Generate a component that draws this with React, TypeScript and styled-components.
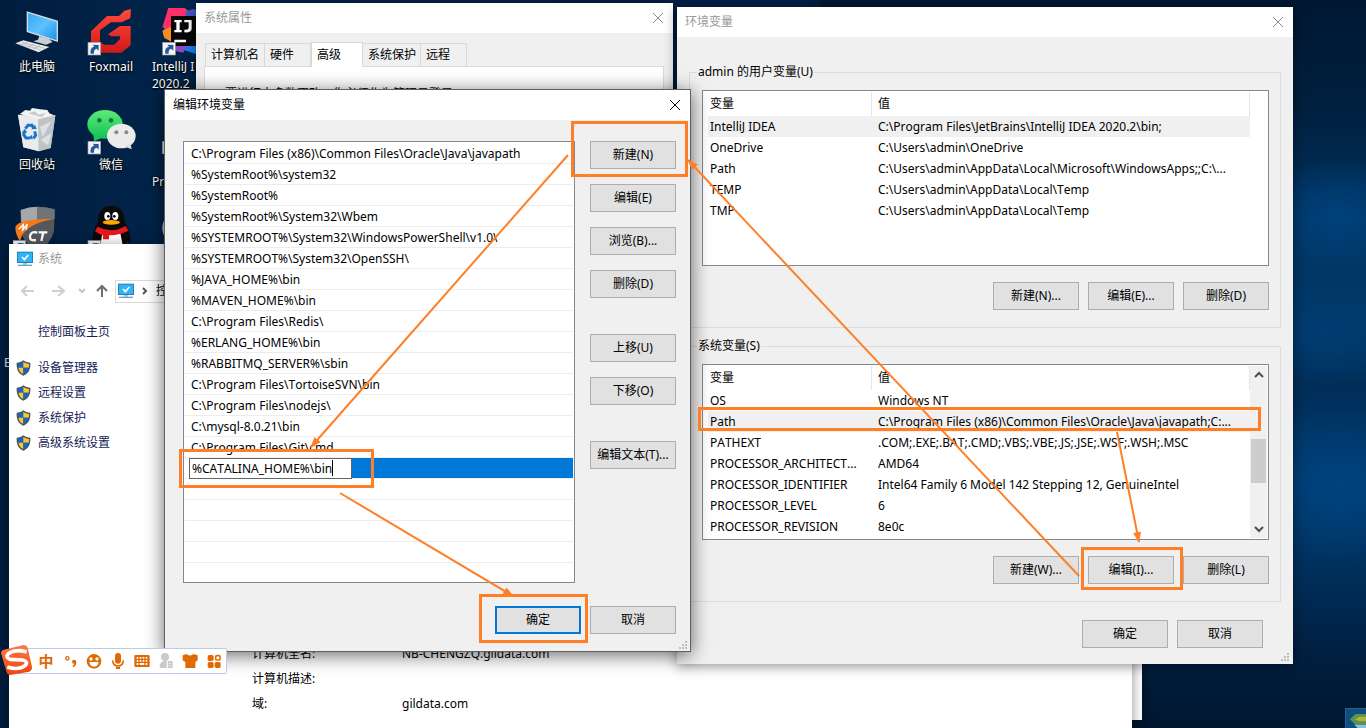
import React from "react";
import styled, { createGlobalStyle, css } from "styled-components";

const Global = createGlobalStyle`
  *, *::before, *::after { box-sizing: border-box; }
  body { margin: 0; }
  body, button, input, table {
    font-family: "Noto Sans", "Noto Sans CJK SC", sans-serif;
    font-size: 12px;
    font-kerning: none;
    line-height: 16px;
    color: #000;
  }
  ul, dl, dd, h1, p { margin: 0; padding: 0; list-style: none; }
  h1 { font-size: 12px; font-weight: 400; }
`;

const Desktop = styled.main`
  position: relative;
  width: 100%;
  height: 100vh;
  overflow: hidden;
  background:
    radial-gradient(ellipse 90px 60px at 98% 30%, #00427c 0, transparent 100%),
    radial-gradient(ellipse 110px 50px at 97% 46%, #003c72 0, transparent 100%),
    radial-gradient(ellipse 100px 80px at 98% 67%, #00427e 0, transparent 100%),
    linear-gradient(180deg, #001733 0, #00203f 15%, #00305c 28%, #003868 42%, #002e58 53%, #003a6e 66%, #002d58 80%, #001f40 90%, #001730 100%) right / 40% 100% no-repeat,
    linear-gradient(90deg, #001d3e 0, #02244a 12%, #002048 50%, #001a38 100%);
  background-color: #001d3e;
`;

/* ---------- desktop shortcuts ---------- */

const Shortcuts = styled.ul`
  display: grid;
  grid-template-columns: repeat(3, 74px);
  grid-auto-rows: 98px;
  padding-top: 8px;
`;

const Shortcut = styled.li`
  display: flex;
  flex-direction: column;
  align-items: center;
  gap: 2px;
  color: #fff;
  text-align: center;
  line-height: 17px;
  text-shadow: 0 1px 2px #000, 0 0 2px #000;
  white-space: nowrap;
  svg { width: 48px; height: 48px; flex: none; }
`;

const WideLabel = styled.span`
  width: 66px;
  text-align: left;
`;

const Clipped = styled.span<{ $top: number }>`
  position: absolute;
  left: 4px;
  top: ${(p) => p.$top}px;
  color: #dfe6ee;
`;

/* ---------- windows ---------- */

interface Box { $x: number; $y: number; $w: number; $h: number }

const Window = styled.section<Box & { $active?: boolean; $plain?: boolean }>`
  position: absolute;
  left: ${(p) => p.$x}px;
  top: ${(p) => p.$y}px;
  width: ${(p) => p.$w}px;
  height: ${(p) => p.$h}px;
  display: flex;
  flex-direction: column;
  background: ${(p) => (p.$plain ? "#fff" : "#f0f0f0")};
  box-shadow: 0 2px 12px rgba(0, 0, 0, 0.45);
  ${(p) =>
    p.$active &&
    css`
      outline: 1px solid #5f5f5f;
      outline-offset: -1px;
      box-shadow: 0 3px 18px rgba(0, 0, 0, 0.6);
    `}
`;

const TitleBar = styled.header<{ $active?: boolean }>`
  display: flex;
  align-items: center;
  gap: 5px;
  height: 30px;
  padding: 0 8px;
  flex: none;
  background: #fff;
  ${(p) => p.$active && css`height: 31px; padding: 0 9px;`}
  h1 { flex: 1; color: ${(p) => (p.$active ? "#000" : "#999")}; }
`;

const CloseButton = styled.button<{ $active?: boolean }>`
  display: grid;
  place-items: center;
  width: 14px;
  height: 14px;
  padding: 0;
  border: 0;
  background: none;
  color: ${(p) => (p.$active ? "#000" : "#8a8a8a")};
`;

const PushButton = styled.button<{ $primary?: boolean }>`
  width: 86px;
  height: 28px;
  padding: 0;
  border: ${(p) => (p.$primary ? "2px solid #0078d7" : "1px solid #adadad")};
  border-radius: 0;
  background: #e1e1e1;
`;

const ButtonRow = styled.div<{ $top: number; $right?: number }>`
  display: flex;
  justify-content: flex-end;
  gap: 9px;
  margin-top: ${(p) => p.$top}px;
  padding-right: ${(p) => p.$right ?? 0}px;
`;

const Grip = styled.svg`
  position: absolute;
  right: 3px;
  bottom: 2px;
  width: 9px;
  height: 9px;
`;

/* ---------- system properties ---------- */

const Tabs = styled.nav`
  display: flex;
  align-items: flex-end;
  padding: 9px 9px 0;
`;

const Tab = styled.button<{ $w: number; $on?: boolean }>`
  width: ${(p) => p.$w}px;
  height: ${(p) => (p.$on ? 25 : 23)}px;
  margin-bottom: ${(p) => (p.$on ? -1 : 0)}px;
  padding: 0 0 0 5px;
  text-align: left;
  white-space: nowrap;
  border: 1px solid #d9d9d9;
  border-bottom: 0;
  border-left-width: ${(p) => (p.$on ? 1 : 0)}px;
  background: ${(p) => (p.$on ? "#fff" : "#f0f0f0")};
  position: relative;
  &:first-child { border-left-width: 1px; }
`;

const TabPane = styled.div`
  flex: 1;
  margin: 0 9px 9px 8px;
  padding: 19px 20px;
  border: 1px solid #dcdcdc;
  background: #fff;
`;

/* ---------- environment variables ---------- */

const Body = styled.div`
  padding: 27px 12px 0;
`;

const Group = styled.fieldset`
  min-width: 0;
  margin: 0 0 10px;
  padding: 10px 11px 17px 12px;
  border: 1px solid #dcdcdc;
  legend { height: 16px; margin-left: -5px; padding: 0 1px; }
`;

const GridBox = styled.div`
  display: flex;
  justify-content: space-between;
  height: 176px;
  padding: 1px 1px 1px 5px;
  overflow: hidden;
  border: 1px solid #828790;
  background: #fff;
`;

const VarTable = styled.table`
  width: 542px;
  height: max-content;
  table-layout: fixed;
  border-collapse: separate;
  border-spacing: 0;
  white-space: nowrap;
  th, td { padding: 0 0 0 2px; overflow: hidden; text-align: left; font-weight: 400; }
  th { height: 24px; border-right: 1px solid #e5e5e5; }
  td { height: 21px; }
  th:first-child { width: 164px; }
  th + th, td + td { padding-left: 6px; }
`;

const VarRow = styled.tr<{ $on?: boolean }>`
  background: ${(p) => (p.$on ? "#f0f0f0" : "#fff")};
`;

const ScrollBar = styled.div`
  display: flex;
  flex-direction: column;
  align-items: center;
  width: 17px;
  background: #f0f0f0;
  svg { flex: none; width: 17px; height: 17px; }
`;

const Thumb = styled.div`
  width: 15px;
  height: 44px;
  margin: 56px 0 auto;
  background: #cdcdcd;
`;

/* ---------- edit dialog ---------- */

const EditBody = styled.div`
  display: flex;
  gap: 15px;
  padding: 21px 15px 0 19px;
`;

const PathList = styled.ul`
  flex: 1;
  height: 442px;
  padding: 1px;
  overflow: hidden;
  border: 1px solid #828790;
  background: #fff;
`;

const PathItem = styled.li<{ $editing?: boolean }>`
  height: 21px;
  padding: 2px 6px;
  border-bottom: 1px solid #ececec;
  line-height: 17px;
  white-space: nowrap;
  ${(p) =>
    p.$editing &&
    css`
      position: relative;
      padding: 0 0 0 4px;
      background: linear-gradient(90deg, #fff 4px, #0078d7 4px);
    `}
`;

const PathInput = styled.input`
  display: block;
  width: 163px;
  height: 21px;
  padding: 0 2px;
  border: 1px solid #646464;
  border-radius: 0;
  background: #fff;
  outline: 0;
`;

const Caret = styled.span`
  position: absolute;
  left: 147px;
  top: 2px;
  width: 1px;
  height: 16px;
  background: #000;
`;

const SideButtons = styled.div`
  display: flex;
  flex-direction: column;
  gap: 36px;
`;

const ButtonStack = styled.div`
  display: grid;
  gap: 15px;
`;

/* ---------- system window ---------- */

const NavBar = styled.div`
  display: flex;
  align-items: center;
  height: 34px;
  padding-left: 11px;
  svg { flex: none; }
`;

const Address = styled.div`
  display: flex;
  align-items: center;
  flex: 1;
  height: 23px;
  margin: 0 8px 0 4px;
  padding-left: 2px;
  border: 1px solid #d9d9d9;
`;

const SystemBody = styled.div`
  display: grid;
  grid-template-columns: 243px 1fr;
`;

const SideLinks = styled.nav`
  display: flex;
  flex-direction: column;
  padding: 11px 0 0 7px;
`;

const SideLink = styled.a<{ $home?: boolean }>`
  display: flex;
  align-items: center;
  gap: 7px;
  height: 25px;
  margin-bottom: ${(p) => (p.$home ? 11 : 0)}px;
  padding-left: ${(p) => (p.$home ? 22 : 0)}px;
  color: #151c55;
  text-decoration: none;
`;

const Facts = styled.dl`
  display: grid;
  grid-template-columns: 150px 1fr;
  grid-auto-rows: 25px;
  align-items: center;
  padding-top: 333px;
`;

/* ---------- input method bar ---------- */

const ImeBar = styled.div`
  position: absolute;
  left: 16px;
  top: 648px;
  display: flex;
  align-items: center;
  width: 211px;
  height: 26px;
  padding-left: 17px;
  border: 1px solid #bccbe6;
  border-radius: 2px;
  background: #fff;
`;

const ImeLogo = styled.svg`
  position: absolute;
  left: -17px;
  top: -6px;
  width: 34px;
  height: 34px;
`;

const ImeButton = styled.button`
  display: grid;
  place-items: center;
  width: 24px;
  height: 24px;
  padding: 0;
  border: 0;
  background: none;
  color: #df6a04;
  svg { width: 24px; height: 24px; }
`;

const Glyph = styled.span`
  font-family: "Noto Sans CJK SC", sans-serif;
  font-size: 15px;
  font-weight: 700;
`;

const Annotations = styled.svg`
  position: absolute;
  inset: 0;
  width: 100%;
  height: 100%;
  pointer-events: none;
`;

const Corner = styled.svg`
  position: absolute;
  left: 1345px;
  top: 708px;
  width: 21px;
  height: 20px;
`;

/* ---------- drawings ---------- */

const Cross = () => (
  <svg width="12" height="12" viewBox="0 0 12 12" aria-hidden="true">
    <path d="M1 1l10 10M11 1L1 11" stroke="currentColor" fill="none" />
  </svg>
);

const ResizeGrip = () => (
  <Grip viewBox="0 0 9 9" aria-hidden="true" fill="#bfbfbf">
    <path d="M6 0h2v2H6zM3 3h2v2H3zM6 3h2v2H6zM0 6h2v2H0zM3 6h2v2H3zM6 6h2v2H6z" />
  </Grip>
);

const Monitor = () => (
  <svg width="16" height="16" viewBox="0 0 48 48" aria-hidden="true">
    <rect x="0" y="2" width="48" height="34" fill="#2b7db3" />
    <rect x="3" y="5" width="42" height="28" fill="#2fb4f5" />
    <path d="M15 18l7 8 12-14" stroke="#fff" strokeWidth="5" fill="none" />
    <path d="M18 36h12v5H18z" fill="#9cc4da" />
    <path d="M3 41h42v4H3z" fill="#6fa0bb" />
  </svg>
);

const Shield = () => (
  <svg width="15" height="16" viewBox="0 0 45 48" aria-hidden="true">
    <path d="M22 1C17 6 9 8 2 8c-1 18 4 32 20 39C39 40 44 26 43 8 36 8 28 6 22 1z" fill="#4a5560" />
    <path d="M22 6C17 10 11 11 6 12c0 4 0 8 1 11h15z" fill="#0f67c8" />
    <path d="M22 6c5 4 11 5 17 6 0 4 0 8-1 11H22z" fill="#ffc52e" />
    <path d="M7 23h15v19C13 38 9 31 7 23z" fill="#ffc52e" />
    <path d="M38 23H22v19c9-4 14-11 16-19z" fill="#0f67c8" />
  </svg>
);

const Link = ({ x, y }: { x: number; y: number }) => (
  <g transform={`translate(${x} ${y})`}>
    <rect width="38" height="38" fill="#f4f4f4" stroke="#9a9a9a" strokeWidth="2" />
    <path d="M8 34c-2-12 2-20 11-21l-5-6 18 1v17l-6-6c-6 1-9 6-8 15z" fill="#23589f" />
  </g>
);

const ComputerIcon = () => (
  <svg viewBox="39 24 144 144" aria-hidden="true">
    <defs>
      <linearGradient id="scr" x1="0" y1="0" x2="1" y2="1">
        <stop offset="0" stopColor="#36a8f5" /><stop offset=".5" stopColor="#5cc2ff" /><stop offset="1" stopColor="#1e90e8" />
      </linearGradient>
    </defs>
    <path d="M118 108l28 8 12 10-20 8-38-10 14-5z" fill="#c9ced2" />
    <path d="M80 34l94 28v64l-94-30z" fill="#d9dee1" />
    <path d="M84 39l86 26v56L84 93z" fill="url(#scr)" />
    <path d="M46 130l24-9 78 20-32 16z" fill="#e6e8ea" />
    <path d="M56 131l68 19M66 127l68 18M62 136l22-10M80 142l22-10M98 147l22-10" stroke="#a9aeb3" strokeWidth="2" />
  </svg>
);

const FoxmailIcon = () => (
  <svg viewBox="262 24 144 144" aria-hidden="true">
    <defs>
      <linearGradient id="fox" x1="0" y1="0" x2="0" y2="1">
        <stop offset="0" stopColor="#ff4a3c" /><stop offset="1" stopColor="#d01a1a" />
      </linearGradient>
    </defs>
    <path d="M394 27l-2 28-26 12h-32l-33 24v34l12 9h30l18-17v-8h-26l-10-6 36-25h32v58l-28 22h-76l-15-14V94l48-46h36l16-16z" fill="url(#fox)" />
    <Link x={265} y={127} />
  </svg>
);

const IdeaIcon = () => (
  <svg viewBox="486 24 144 144" aria-hidden="true">
    <path d="M508 24l44-2 36 24 40 24-30 94-62-20-44-40z" fill="#1680f0" />
    <path d="M508 24l44-4 26 22-58 50-30-10z" fill="#ff3068" />
    <path d="M560 34l26-8 30 34-56 10z" fill="#4658c8" />
    <path d="M490 92l26-12v44l-20-10z" fill="#ff8a1c" />
    <path d="M520 132h50l-18 26-26-6z" fill="#8c4ac0" />
    <rect x="516" y="48" width="90" height="90" fill="#080808" />
    <path d="M526 60h22v7h-6v23h6v7h-22v-7h6V67h-6zM556 60h22v26q-1 13-22 11v-8q12 2 13-5V67h-13zM526 119h35v8h-35z" fill="#fff" />
    <Link x={491} y={127} />
  </svg>
);

const BinIcon = () => (
  <svg viewBox="39 318 144 144" aria-hidden="true">
    <path d="M54 344l112 2-14 98-36 10-46-12z" fill="#d4d7d9" />
    <path d="M54 344l60 12 4 98-48-12z" fill="#e9ebec" />
    <path d="M114 356l52-10-14 98-36 10z" fill="#c0c4c7" />
    <path d="M120 380l34-16-26 46zM122 420l32-20-10 36z" fill="#dfe2e4" />
    <path d="M60 342l16-12 14 2 6-8 24 4 22 2 6 10 14 6-48 12z" fill="#f2f3f4" />
    <path d="M84 340l20-6 12 10 22-6-12 14z" fill="#c8cbce" />
    <g fill="none" stroke="#1876cf" strokeWidth="9">
      <path d="M76 386l8-10h12l5 9M104 394l3 12-7 9M90 414H78l-7-10 2-10" />
    </g>
    <path d="M94 388l16-1-5-13zM96 404l2 15-12-6zM66 398l8-12 8 12z" fill="#1876cf" />
  </svg>
);

const ChatIcon = () => (
  <svg viewBox="262 318 144 144" overflow="visible" aria-hidden="true">
    <defs>
      <linearGradient id="wx" x1="0" y1="0" x2="0" y2="1">
        <stop offset="0" stopColor="#5ceb78" /><stop offset="1" stopColor="#14c257" />
      </linearGradient>
    </defs>
    <ellipse cx="316" cy="373" rx="53" ry="43" fill="url(#wx)" />
    <path d="M280 400l4 24 26-12z" fill="#1cc55c" />
    <circle cx="299" cy="361" r="7" fill="#147a3c" /><circle cx="334" cy="361" r="7" fill="#147a3c" />
    <ellipse cx="365" cy="408" rx="43" ry="37" fill="#ebebeb" />
    <path d="M376 440l20 8-4-18z" fill="#dedede" />
    <circle cx="350" cy="397" r="6" fill="#8a8a8a" /><circle cx="380" cy="397" r="6" fill="#8a8a8a" />
    <Link x={265} y={424} />
  </svg>
);

const CtIcon = () => (
  <svg viewBox="39 612 144 144" aria-hidden="true">
    <path d="M62 630q48-18 102-2l-2 66q-10 40-50 60-46-24-50-70z" fill="#54585c" />
    <path d="M62 630q26-10 50-10v40l-48 8z" fill="#a4a8ab" />
    <path d="M112 620q28 0 52 8v28l-52 4z" fill="#6f7478" />
    <path d="M46 680q10-24 120-24-70 10-98 46l-8 22q-14-20-14-44z" fill="#f57a17" />
    <path d="M56 688l14-14-2 16 14-18-4 18" stroke="#fff" strokeWidth="4" fill="none" />
    <path d="M112 698q-18-6-22 10-2 16 18 12M116 697h26M130 697l-6 26" stroke="#fff" strokeWidth="7" fill="none" />
    <Link x={39} y={722} />
  </svg>
);

const PenguinIcon = () => (
  <svg viewBox="262 612 144 144" aria-hidden="true">
    <path d="M335 618c28 0 40 20 40 48 12 20 18 40 18 62l-12-6-8 32h-76l-8-32-12 6c0-22 6-42 18-62 0-28 12-48 40-48z" fill="#0a0a0a" />
    <path d="M308 700h54l10 50h-72z" fill="#fff" />
    <ellipse cx="323" cy="648" rx="9" ry="12" fill="#fff" /><ellipse cx="347" cy="648" rx="9" ry="12" fill="#fff" />
    <circle cx="326" cy="649" r="4" /><circle cx="344" cy="649" r="4" />
    <ellipse cx="335" cy="667" rx="26" ry="7" fill="#ffa800" />
    <path d="M294 680q42 22 84-2l8 14q-22 12-58 14v12h-18v-12q-14-4-24-12z" fill="#e8171c" />
    <Link x={265} y={722} />
  </svg>
);

const EdgeIcon = ({ badge }: { badge?: boolean }) => (
  <svg viewBox="486 318 144 144" aria-hidden="true">
    {badge ? <Link x={490} y={424} /> : <circle cx="545" cy="390" r="55" fill="#c8ccd0" />}
  </svg>
);

const ImeSvg = ({ cx, children }: { cx: number; children: React.ReactNode }) => (
  <svg viewBox={`${cx - 36} 537 72 72`} fill="currentColor" aria-hidden="true">{children}</svg>
);

/* ---------- data ---------- */

const paths = [
  "C:\\Program Files (x86)\\Common Files\\Oracle\\Java\\javapath",
  "%SystemRoot%\\system32",
  "%SystemRoot%",
  "%SystemRoot%\\System32\\Wbem",
  "%SYSTEMROOT%\\System32\\WindowsPowerShell\\v1.0\\",
  "%SYSTEMROOT%\\System32\\OpenSSH\\",
  "%JAVA_HOME%\\bin",
  "%MAVEN_HOME%\\bin",
  "C:\\Program Files\\Redis\\",
  "%ERLANG_HOME%\\bin",
  "%RABBITMQ_SERVER%\\sbin",
  "C:\\Program Files\\TortoiseSVN\\bin",
  "C:\\Program Files\\nodejs\\",
  "C:\\mysql-8.0.21\\bin",
  "C:\\Program Files\\Git\\cmd",
];

const userVars: [string, string][] = [
  ["IntelliJ IDEA", "C:\\Program Files\\JetBrains\\IntelliJ IDEA 2020.2\\bin;"],
  ["OneDrive", "C:\\Users\\admin\\OneDrive"],
  ["Path", "C:\\Users\\admin\\AppData\\Local\\Microsoft\\WindowsApps;;C:\\..."],
  ["TEMP", "C:\\Users\\admin\\AppData\\Local\\Temp"],
  ["TMP", "C:\\Users\\admin\\AppData\\Local\\Temp"],
];

const systemVars: [string, string][] = [
  ["OS", "Windows NT"],
  ["Path", "C:\\Program Files (x86)\\Common Files\\Oracle\\Java\\javapath;C:..."],
  ["PATHEXT", ".COM;.EXE;.BAT;.CMD;.VBS;.VBE;.JS;.JSE;.WSF;.WSH;.MSC"],
  ["PROCESSOR_ARCHITECT...", "AMD64"],
  ["PROCESSOR_IDENTIFIER", "Intel64 Family 6 Model 142 Stepping 12, GenuineIntel"],
  ["PROCESSOR_LEVEL", "6"],
  ["PROCESSOR_REVISION", "8e0c"],
];

const marks = [
  [571, 121, 117, 56],
  [179, 449, 195, 39],
  [479, 594, 109, 49],
  [698, 407, 563, 24],
  [1081, 547, 102, 43],
];

const arrows = [
  [568, 155, 311, 447],
  [340, 493, 513, 596],
  [1117, 432, 1139, 542],
  [1079, 576, 688, 160],
];

const Variables = ({ rows, selected }: { rows: [string, string][]; selected: string }) => (
  <VarTable>
    <thead>
      <tr><th scope="col">变量</th><th scope="col">值</th></tr>
    </thead>
    <tbody>
      {rows.map(([name, value]) => (
        <VarRow key={name} $on={name === selected}><td>{name}</td><td>{value}</td></VarRow>
      ))}
    </tbody>
  </VarTable>
);

const Title = ({ text, active }: { text: string; active?: boolean }) => (
  <TitleBar $active={active}>
    <h1>{text}</h1>
    <CloseButton $active={active} aria-label="关闭"><Cross /></CloseButton>
  </TitleBar>
);

export default function App() {
  return (
    <Desktop>
      <Global />
      <Shortcuts>
        <Shortcut><ComputerIcon />此电脑</Shortcut>
        <Shortcut><FoxmailIcon />Foxmail</Shortcut>
        <Shortcut><IdeaIcon /><WideLabel>IntelliJ I<br />2020.2</WideLabel></Shortcut>
        <Shortcut><BinIcon />回收站</Shortcut>
        <Shortcut><ChatIcon />微信</Shortcut>
        <Shortcut><EdgeIcon badge /><WideLabel><br />Pr</WideLabel></Shortcut>
        <Shortcut><CtIcon /></Shortcut>
        <Shortcut><PenguinIcon /></Shortcut>
        <Shortcut><EdgeIcon /></Shortcut>
      </Shortcuts>
      <Clipped $top={355}>E</Clipped>

      <Corner viewBox="0 0 63 60" aria-hidden="true">
        <rect width="66" height="63" fill="#0f4f80" stroke="#3b78a4" strokeWidth="3" />
        <path d="M15 34l16-16h34v32H31z" fill="#5f8f52" />
        <path d="M30 34l14-8h20v14H44z" fill="#a9b83a" />
        <path d="M28 50h36v12H40z" fill="#8fc0dc" />
      </Corner>

      <Window $plain $x={900} $y={400} $w={242} $h={320} aria-hidden="true" />

      <Window $plain $x={9} $y={244} $w={1123} $h={520}>
        <TitleBar><Monitor /><h1>系统</h1></TitleBar>
        <NavBar>
          <svg width="91" height="20" viewBox="0 0 91 20" fill="none" aria-hidden="true">
            <path d="M14 10H3M7 5l-5 5 5 5M32 10h12M38 5l6 5-6 5" stroke="#cfcfcf" strokeWidth="2" />
            <path d="M59 8l3 3 3-3" stroke="#c4c4c4" strokeWidth="2" />
            <path d="M82 16V5M77 10l5-5 5 5" stroke="#6e6e6e" strokeWidth="2" />
          </svg>
          <Address>
            <Monitor />
            <svg width="22" height="10" viewBox="0 0 22 10" fill="none" aria-hidden="true">
              <path d="M9 2l3 3-3 3" stroke="#555" strokeWidth="2" />
            </svg>
            控
          </Address>
        </NavBar>
        <SystemBody>
          <SideLinks>
            <SideLink $home href="#home">控制面板主页</SideLink>
            {["设备管理器", "远程设置", "系统保护", "高级系统设置"].map((t) => (
              <SideLink key={t} href={`#${t}`}><Shield />{t}</SideLink>
            ))}
          </SideLinks>
          <Facts>
            <dt>计算机全名:</dt><dd>NB-CHENGZQ.gildata.com</dd>
            <dt>计算机描述:</dt><dd />
            <dt>域:</dt><dd>gildata.com</dd>
          </Facts>
        </SystemBody>
      </Window>

      <Window $x={196} $y={3} $w={477} $h={540}>
        <Title text="系统属性" />
        <Tabs>
          <Tab $w={60}>计算机名</Tab>
          <Tab $w={46}>硬件</Tab>
          <Tab $w={52} $on>高级</Tab>
          <Tab $w={58}>系统保护</Tab>
          <Tab $w={46}>远程</Tab>
        </Tabs>
        <TabPane>要进行大多数更改，你必须作为管理员登录。</TabPane>
      </Window>

      <Window $x={677} $y={7} $w={616} $h={657}>
        <Title text="环境变量" />
        <Body>
          <Group>
            <legend>admin 的用户变量(U)</legend>
            <GridBox><Variables rows={userVars} selected="IntelliJ IDEA" /></GridBox>
            <ButtonRow $top={16}>
              <PushButton>新建(N)...</PushButton>
              <PushButton>编辑(E)...</PushButton>
              <PushButton>删除(D)</PushButton>
            </ButtonRow>
          </Group>
          <Group>
            <legend>系统变量(S)</legend>
            <GridBox>
              <Variables rows={systemVars} selected="Path" />
              <ScrollBar aria-hidden="true">
                <svg viewBox="0 0 17 17" fill="none"><path d="M5 11l4-4 4 4" stroke="#505050" strokeWidth="2" /></svg>
                <Thumb />
                <svg viewBox="0 0 17 17" fill="none"><path d="M5 6l4 4 4-4" stroke="#505050" strokeWidth="2" /></svg>
              </ScrollBar>
            </GridBox>
            <ButtonRow $top={16}>
              <PushButton>新建(W)...</PushButton>
              <PushButton>编辑(I)...</PushButton>
              <PushButton>删除(L)</PushButton>
            </ButtonRow>
          </Group>
          <ButtonRow $top={18} $right={18}>
            <PushButton>确定</PushButton>
            <PushButton>取消</PushButton>
          </ButtonRow>
        </Body>
        <ResizeGrip />
      </Window>

      <Window $active $x={164} $y={89} $w={527} $h={563}>
        <Title text="编辑环境变量" active />
        <EditBody>
          <PathList>
            {paths.map((p) => <PathItem key={p}>{p}</PathItem>)}
            <PathItem $editing>
              <PathInput aria-label="路径" defaultValue="%CATALINA_HOME%\bin" />
              <Caret />
            </PathItem>
            {[1, 2, 3, 4].map((n) => <PathItem key={n} />)}
          </PathList>
          <SideButtons>
            <ButtonStack>
              <PushButton>新建(N)</PushButton>
              <PushButton>编辑(E)</PushButton>
              <PushButton>浏览(B)...</PushButton>
              <PushButton>删除(D)</PushButton>
            </ButtonStack>
            <ButtonStack>
              <PushButton>上移(U)</PushButton>
              <PushButton>下移(O)</PushButton>
            </ButtonStack>
            <PushButton>编辑文本(T)...</PushButton>
          </SideButtons>
        </EditBody>
        <ButtonRow $top={23} $right={15}>
          <PushButton $primary>确定</PushButton>
          <PushButton>取消</PushButton>
        </ButtonRow>
        <ResizeGrip />
      </Window>

      <ImeBar>
        <ImeLogo viewBox="0 516 102 102" aria-hidden="true">
          <defs>
            <linearGradient id="ime" x1="0" y1="0" x2="0" y2="1">
              <stop offset="0" stopColor="#ff7a45" /><stop offset="1" stopColor="#ee4310" />
            </linearGradient>
          </defs>
          <path d="M12 536l58-14q10-1 13 8l13 58q1 10-8 14l-58 10q-8 1-10-8L3 546q0-8 9-10z" fill="url(#ime)" />
          <path d="M80 543q-32-10-54 4-12 12 4 18l38 2q18 4 8 16-20 16-54 5" fill="none" stroke="#fff" strokeWidth="11" />
        </ImeLogo>
        <ImeButton aria-label="中文"><Glyph>中</Glyph></ImeButton>
        <ImeButton aria-label="标点">
          <ImeSvg cx={210}>
            <circle cx="202" cy="565" r="5" fill="none" stroke="currentColor" strokeWidth="4" />
            <path d="M216 575q0-6 6-6 7 0 7 8 0 10-9 15l-3-3q5-4 5-8-6 0-6-6z" />
          </ImeSvg>
        </ImeButton>
        <ImeButton aria-label="表情">
          <ImeSvg cx={283}>
            <path fillRule="evenodd" d="M283 552a22 22 0 100 44 22 22 0 000-44zm-9 10a5 5 0 110 10 5 5 0 010-10zm18 0a5 5 0 110 10 5 5 0 010-10zm-23 14h28q-2 14-14 14t-14-14z" />
          </ImeSvg>
        </ImeButton>
        <ImeButton aria-label="语音">
          <ImeSvg cx={354}>
            <rect x="345" y="549" width="18" height="32" rx="9" />
            <path d="M338 571q1 17 16 17t16-17" fill="none" stroke="currentColor" strokeWidth="5" />
            <path d="M348 591h12v6h-12z" />
          </ImeSvg>
        </ImeButton>
        <ImeButton aria-label="键盘">
          <ImeSvg cx={427}>
            <path fillRule="evenodd" d="M408 555h38q4 0 4 4v28q0 4-4 4h-38q-4 0-4-4v-28q0-4 4-4zm3 6v5h5v-5zm9 0v5h5v-5zm9 0v5h5v-5zm9 0v5h5v-5zm-27 9v5h5v-5zm9 0v5h5v-5zm9 0v5h5v-5zm9 0v5h5v-5zm-27 9v6h5v-6zm9 0v6h14v-6zm18 0v6h5v-6z" />
          </ImeSvg>
        </ImeButton>
        <ImeButton aria-label="用户">
          <ImeSvg cx={499}>
            <g fill="#c9c9c9">
              <circle cx="496" cy="561" r="12" />
              <path d="M480 594q-2-20 16-21h6v21z" />
              <path d="M504 573h15v21h-15z" />
            </g>
            <path d="M507 580h8M507 587h8M502 572v22" stroke="#fff" strokeWidth="2" />
          </ImeSvg>
        </ImeButton>
        <ImeButton aria-label="皮肤">
          <ImeSvg cx={571}>
            <path d="M549 556l12-4q10 9 20 0l13 4v15l-7 5v18h-30v-18l-8-5z" />
          </ImeSvg>
        </ImeButton>
        <ImeButton aria-label="工具箱">
          <ImeSvg cx={643}>
            <rect x="624" y="555" width="18" height="18" rx="5" />
            <rect x="624" y="576" width="18" height="18" rx="5" />
            <rect x="645" y="576" width="18" height="18" rx="5" />
            <rect x="648" y="557" width="13" height="13" rx="4" fill="none" stroke="currentColor" strokeWidth="5" />
          </ImeSvg>
        </ImeButton>
      </ImeBar>

      <Annotations aria-hidden="true">
        <defs>
          <marker id="head" orient="auto" markerUnits="userSpaceOnUse" markerWidth="12" markerHeight="10" refX="10" refY="4">
            <path d="M0 0l11 4-11 4z" fill="#ff7f27" />
          </marker>
        </defs>
        {marks.map(([x, y, w, h]) => (
          <rect key={`${x}-${y}`} x={x + 1.5} y={y + 1.5} width={w - 3} height={h - 3} fill="none" stroke="#ff7f27" strokeWidth="3" />
        ))}
        {arrows.map(([x1, y1, x2, y2]) => (
          <line key={x1} x1={x1} y1={y1} x2={x2} y2={y2} stroke="#ff7f27" strokeWidth="2" markerEnd="url(#head)" />
        ))}
      </Annotations>
    </Desktop>
  );
}
